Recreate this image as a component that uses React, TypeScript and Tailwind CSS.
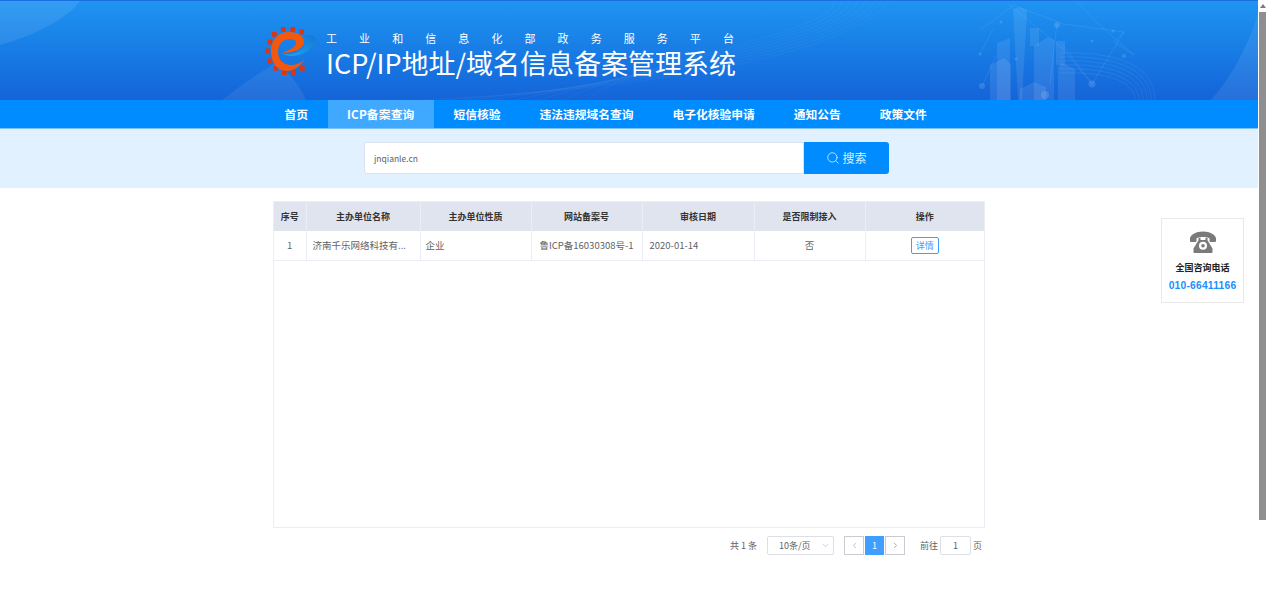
import React from "react";
import { Search, ChevronDown, ChevronLeft, ChevronRight } from "lucide-react";

const navItems = [
  "首页",
  "ICP备案查询",
  "短信核验",
  "违法违规域名查询",
  "电子化核验申请",
  "通知公告",
  "政策文件",
];

const columns = [
  { title: "序号", width: 32 },
  { title: "主办单位名称", width: 114 },
  { title: "主办单位性质", width: 111 },
  { title: "网站备案号", width: 111 },
  { title: "审核日期", width: 112 },
  { title: "是否限制接入", width: 111 },
  { title: "操作", width: 119 },
];

const cjk = "font-['Noto_Sans_CJK_SC','Liberation_Sans',sans-serif]";

const teeth = [
  [5, 16],
  [2.7, 25],
  [5, 35],
  [10.7, 42.3],
  [19.3, 46.7],
  [28.3, 46.7],
  [37.3, 42.3],
  [9.3, 8.3],
  [18.3, 3.3],
  [27.7, 3.3],
  [36.7, 6],
];

const Logo = () => (
  <svg width="52" height="50" viewBox="0 0 52 50" className="shrink-0">
    <defs>
      <linearGradient id="swoosh" x1="0" y1="1" x2="1" y2="0">
        <stop offset="0" stopColor="#1fa6ee" />
        <stop offset="1" stopColor="#1577d6" />
      </linearGradient>
    </defs>
    {teeth.map(([x, y]) => (
      <rect key={`${x}-${y}`} x={x - 2.4} y={y - 2.4} width="4.8" height="4.8" rx="0.5" fill="#dc3512" />
    ))}
    <path
      d="M38 10C44 8 50 9 51 13C52 18 44 26 34 29C27 31 20 30 17 27C24 30 34 27 39 21C42 17 42 13 38 10Z"
      fill="url(#swoosh)"
    />
    <path
      d="M40 33C35 41 28 45 22 45C12 45 6 36 6 25C6 14 13 6 24 6C33 6 39 10 39 16C39 23 28 27 18 27C24 23 31 22 31 17C31 14 28 13 25 13C17 13 13 19 13 26C13 34 19 39 26 39C31 39 36 37 40 33Z"
      fill="#f4580c"
    />
  </svg>
);

const HeaderArt = () => (
  <svg
    className="absolute inset-0 h-full w-full"
    viewBox="0 0 1258 99"
    preserveAspectRatio="none"
  >
    <path d="M0 44C36 34 66 18 80 0H0z" fill="#ffffff" fillOpacity="0.09" />
    <path d="M222 99C240 85 258 72 276 62C290 72 300 85 306 99z" fill="#ffffff" fillOpacity="0.07" />
    <path d="M1211 99c22-24 38-58 47-86v86z" fill="#ffffff" fillOpacity="0.08" />
    {[0, 8, 16, 24, 32, 40, 48, 56].map((d) => (
      <path
        key={d}
        d={`M${420 + d * 3} 99C620 ${90 - d / 2} 840 ${60 - d / 2} ${890 - d} 0`}
        fill="none"
        stroke="#ffffff"
        strokeOpacity="0.04"
      />
    ))}
    {[0, 4, 8, 12, 16, 20].map((d) => (
      <path
        key={d}
        d={`M1060 ${52 + d}C1110 ${50 + d} ${1155 - d} ${62 + d} ${1155 - d} 99`}
        fill="none"
        stroke="#ffffff"
        strokeOpacity="0.07"
      />
    ))}
    <g fill="#ffffff" fillOpacity="0.09">
      <path d="M1013 9c4-4 11-3 14 1l-5 89h-4z" />
      <path d="M997 42l13-5v62h-13z" />
      <path d="M990 64l14-7 7 6v36h-21z" />
      <path d="M1034 45l14-9 6 3v60h-20z" />
      <path d="M1058 66l4-4 13 6v31h-17z" />
      <path d="M1030 27h9v18h-9z" />
      <path d="M1056 40h9v24h-9z" />
      <path d="M1020 88l14-7 12 5v13h-26z" />
    </g>
    <g stroke="#ffffff" strokeOpacity="0.08" fill="none">
      <path d="M980 28l13-8 20-16 50 19 61 8-10 10 20 13-39-34-20-22M980 53l13-25M1124 31l-32 52-30-36-54-44" />
      <path d="M1057 23l-7 60M1092 83l-30-40M982 85l14-30" />
    </g>
    <g fill="#ffffff" fillOpacity="0.13">
      <circle cx="1057" cy="24" r="3" />
      <circle cx="1092" cy="83" r="3.500" />
      <circle cx="982" cy="85" r="3" />
      <circle cx="1045" cy="94" r="4" />
      <circle cx="1124" cy="55" r="2" />
      <circle cx="1092" cy="40" r="1.500" />
      <circle cx="1016" cy="58" r="1.500" />
      <circle cx="980" cy="53" r="1.500" />
      <circle cx="1001" cy="21" r="1.500" />
      <circle cx="1113" cy="30" r="1.500" />
    </g>
  </svg>
);

const PhoneIcon = () => (
  <svg width="26" height="22" viewBox="0 0 26 22" fill="#7a7a7a">
    <path d="M0 7.500C0 4 6 .5 13 .5S26 4 26 7.500v2.500c0 .6-.4 1-1 1h-4.500c-.6 0-1-.4-1-1V7.200C18 6.500 15.500 6 13 6s-5 .5-6.500 1.200V10c0 .6-.4 1-1 1H1c-.6 0-1-.4-1-1z" />
    <path
      fillRule="evenodd"
      d="M8.500 6.800h2V9h5V6.800h2v2.400l5 8.300V21c0 .6-.4 1-1 1H4.500c-.6 0-1-.4-1-1v-3.500l5-8.300zM13 10.800a4 4 0 100 8 4 4 0 000-8zm0 2.200a1.800 1.800 0 110 3.600 1.800 1.800 0 010-3.600z"
    />
  </svg>
);

const App = () => {
  return (
    <div className={`flex h-[612px] w-full overflow-hidden bg-white ${cjk}`}>
      <div className="relative min-w-0 flex-1">
        <header className="relative h-[100px] border-t border-[#1a6fe0] bg-gradient-to-b from-[#1f94f2] to-[#1564d8]">
          <HeaderArt />
          <div className="relative flex h-full items-center pl-[265px] pt-[1px]">
            <Logo />
            <div className="ml-[9px] flex w-[408px] flex-col pt-[9px] text-white">
              <div className="flex justify-between text-[11px] leading-[14px]">
                {"工业和信息化部政务服务平台".split("").map((c, i) => (
                  <span key={i}>{c}</span>
                ))}
              </div>
              <h1 className="whitespace-nowrap text-[27px] font-normal leading-[36px]">
                ICP/IP地址/域名信息备案管理系统
              </h1>
            </div>
          </div>
        </header>

        <nav className="flex h-[28px] items-stretch bg-[#008cff] pl-[265px]">
          {navItems.map((item, i) => (
            <a
              key={item}
              className={`flex items-center whitespace-nowrap px-[19.5px] text-[11.75px] font-bold text-white ${
                i === 1 ? "bg-[#3fa9ff] tracking-[0.15px]" : ""
              }`}
            >
              {item}
            </a>
          ))}
        </nav>

        <div className="flex h-[60px] items-start justify-center border-t border-[#7cc2ff] bg-[#e2f1ff] pr-[5px] pt-[13px]">
          <div className="flex h-[32px] w-[525px]">
            <div className="flex flex-1 items-center rounded-l-[3px] border border-[#dce3ee] bg-white pl-[9px] text-[8.5px] text-[#606266]">
              jnqianle.cn
            </div>
            <button className="flex w-[85px] items-center justify-center gap-[2px] rounded-r-[3px] bg-[#008cff] text-[12px] text-[#dcefff]">
              <Search size={14} strokeWidth={1.4} />
              搜索
            </button>
          </div>
        </div>

        <main className="ml-[273px] mt-[13px] w-[712px]">
          <div className="h-[327px] border border-[#ebeef5] bg-white">
            <table className="w-full table-fixed border-collapse">
              <colgroup>
                {columns.map((c) => (
                  <col key={c.title} style={{ width: c.width }} />
                ))}
              </colgroup>
              <thead>
                <tr className="h-[29px] bg-[#e0e4ef]">
                  {columns.map((c) => (
                    <th
                      key={c.title}
                      className="border-r border-[#ebeef5] p-0 text-center text-[9px] font-bold text-[#333333] last:border-r-0"
                    >
                      {c.title}
                    </th>
                  ))}
                </tr>
              </thead>
              <tbody>
                <tr className="h-[29px] border-b border-[#ebeef5] text-[9.5px] text-[#606266]">
                  <td className="border-r border-[#ebeef5] p-0 text-center">1</td>
                  <td className="truncate border-r border-[#ebeef5] py-0 pl-[6px] pr-0">
                    济南千乐网络科技有...
                  </td>
                  <td className="border-r border-[#ebeef5] py-0 pl-[5px] pr-0">企业</td>
                  <td className="border-r border-[#ebeef5] p-0 text-center">
                    鲁ICP备16030308号-1
                  </td>
                  <td className="border-r border-[#ebeef5] py-0 pl-[7px] pr-0">2020-01-14</td>
                  <td className="border-r border-[#ebeef5] p-0 text-center">否</td>
                  <td className="p-0 text-center">
                    <button className="inline-flex h-[17px] w-[28px] items-center justify-center rounded-[2px] border border-[#409eff] text-[9px] text-[#409eff]">
                      详情
                    </button>
                  </td>
                </tr>
              </tbody>
            </table>
          </div>

          <div className="mt-[8px] flex h-[19px] items-center pl-[457px] text-[9px] text-[#606266]">
            <span className="w-[37px] whitespace-nowrap">共 1 条</span>
            <div className="flex h-[19px] w-[67px] items-center justify-between rounded-[2px] border border-[#dcdfe6] pl-[11px] pr-[3px]">
              <span>10条/页</span>
              <ChevronDown size={9} className="text-[#c0c4cc]" />
            </div>
            <div className="ml-[10px] flex h-[19px] w-[61px] gap-[1px]">
              <div className="flex w-[20px] items-center justify-center border border-[#c8cbd1] text-[#b0b4bc]">
                <ChevronLeft size={9} />
              </div>
              <div className="flex w-[19px] items-center justify-center bg-[#409eff] text-white">
                1
              </div>
              <div className="flex w-[20px] items-center justify-center border border-[#c8cbd1] text-[#8f939b]">
                <ChevronRight size={9} />
              </div>
            </div>
            <span className="ml-[15px] whitespace-nowrap">前往</span>
            <div className="ml-[2px] flex h-[19px] w-[31px] items-center justify-center rounded-[2px] border border-[#dcdfe6]">
              1
            </div>
            <span className="ml-[2px]">页</span>
          </div>
        </main>

        {/* fixed consult card */}
        <aside className="absolute left-[1161px] top-[218px] flex h-[85px] w-[83px] flex-col items-center border border-[#e8e8e8] bg-white pt-[12px]">
          <PhoneIcon />
          <div className="mt-[8px] text-[9px] font-bold leading-[14px] text-[#222222]">全国咨询电话</div>
          <div className="mt-[3px] font-['Liberation_Sans',sans-serif] text-[10.3px] font-bold leading-[16px] tracking-[0.2px] text-[#1890ff]">
            010-66411166
          </div>
        </aside>
      </div>

      {/* scrollbar */}
      <div className="flex w-[9px] shrink-0 flex-col bg-white pl-[1px] pr-[1px]">
        <div className="flex h-[12px] items-center justify-center">
          <div className="h-0 w-0 border-x-[3px] border-b-[4px] border-x-transparent border-b-[#7a7a7a]" />
        </div>
        <div className="h-[508px] bg-[#8f8f8f]" />
      </div>
    </div>
  );
};

export default App;
